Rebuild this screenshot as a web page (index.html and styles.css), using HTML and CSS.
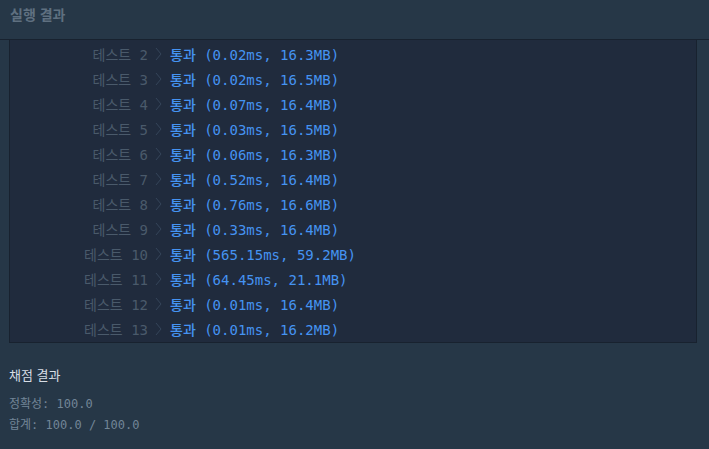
FILE: index.html
```html
<!DOCTYPE html>
<html lang="ko">
<head>
<meta charset="utf-8">
<link rel="stylesheet" href="styles.css">
</head>
<body>
<div class="header"><span class="title">실행 결과</span></div>
<div class="console">
  <div class="row"><span class="label">테스트 2</span><svg class="chev" width="7" height="14" viewBox="0 0 7 14"><polyline points="1,1 6,7 1,13" fill="none" stroke="currentColor" stroke-width="1"/></svg><span class="res"><span class="pass">통과</span> (0.02ms, 16.3MB)</span></div>
  <div class="row"><span class="label">테스트 3</span><svg class="chev" width="7" height="14" viewBox="0 0 7 14"><polyline points="1,1 6,7 1,13" fill="none" stroke="currentColor" stroke-width="1"/></svg><span class="res"><span class="pass">통과</span> (0.02ms, 16.5MB)</span></div>
  <div class="row"><span class="label">테스트 4</span><svg class="chev" width="7" height="14" viewBox="0 0 7 14"><polyline points="1,1 6,7 1,13" fill="none" stroke="currentColor" stroke-width="1"/></svg><span class="res"><span class="pass">통과</span> (0.07ms, 16.4MB)</span></div>
  <div class="row"><span class="label">테스트 5</span><svg class="chev" width="7" height="14" viewBox="0 0 7 14"><polyline points="1,1 6,7 1,13" fill="none" stroke="currentColor" stroke-width="1"/></svg><span class="res"><span class="pass">통과</span> (0.03ms, 16.5MB)</span></div>
  <div class="row"><span class="label">테스트 6</span><svg class="chev" width="7" height="14" viewBox="0 0 7 14"><polyline points="1,1 6,7 1,13" fill="none" stroke="currentColor" stroke-width="1"/></svg><span class="res"><span class="pass">통과</span> (0.06ms, 16.3MB)</span></div>
  <div class="row"><span class="label">테스트 7</span><svg class="chev" width="7" height="14" viewBox="0 0 7 14"><polyline points="1,1 6,7 1,13" fill="none" stroke="currentColor" stroke-width="1"/></svg><span class="res"><span class="pass">통과</span> (0.52ms, 16.4MB)</span></div>
  <div class="row"><span class="label">테스트 8</span><svg class="chev" width="7" height="14" viewBox="0 0 7 14"><polyline points="1,1 6,7 1,13" fill="none" stroke="currentColor" stroke-width="1"/></svg><span class="res"><span class="pass">통과</span> (0.76ms, 16.6MB)</span></div>
  <div class="row"><span class="label">테스트 9</span><svg class="chev" width="7" height="14" viewBox="0 0 7 14"><polyline points="1,1 6,7 1,13" fill="none" stroke="currentColor" stroke-width="1"/></svg><span class="res"><span class="pass">통과</span> (0.33ms, 16.4MB)</span></div>
  <div class="row"><span class="label">테스트 10</span><svg class="chev" width="7" height="14" viewBox="0 0 7 14"><polyline points="1,1 6,7 1,13" fill="none" stroke="currentColor" stroke-width="1"/></svg><span class="res"><span class="pass">통과</span> (565.15ms, 59.2MB)</span></div>
  <div class="row"><span class="label">테스트 11</span><svg class="chev" width="7" height="14" viewBox="0 0 7 14"><polyline points="1,1 6,7 1,13" fill="none" stroke="currentColor" stroke-width="1"/></svg><span class="res"><span class="pass">통과</span> (64.45ms, 21.1MB)</span></div>
  <div class="row"><span class="label">테스트 12</span><svg class="chev" width="7" height="14" viewBox="0 0 7 14"><polyline points="1,1 6,7 1,13" fill="none" stroke="currentColor" stroke-width="1"/></svg><span class="res"><span class="pass">통과</span> (0.01ms, 16.4MB)</span></div>
  <div class="row"><span class="label">테스트 13</span><svg class="chev" width="7" height="14" viewBox="0 0 7 14"><polyline points="1,1 6,7 1,13" fill="none" stroke="currentColor" stroke-width="1"/></svg><span class="res"><span class="pass">통과</span> (0.01ms, 16.2MB)</span></div>
</div>
<div class="summary">
  <div class="sum-title">채점 결과</div>
  <div class="sum-line">정확성: 100.0</div>
  <div class="sum-line">합계: 100.0 / 100.0</div>
</div>
</body>
</html>
```
FILE: styles.css
```css
html, body {
  margin: 0;
  padding: 0;
  background: #263747;
  height: 100%;
}
body {
  font-family: "DejaVu Sans Mono", "Noto Sans CJK KR", monospace;
  overflow: hidden;
}
.header {
  height: 40px;
  box-sizing: border-box;
  padding: 4px 0 0 10px;
  border-bottom: 1px solid #18222f;
}
.title {
  font-family: "Noto Sans CJK KR", sans-serif;
  font-size: 14px;
  font-weight: 700;
  color: #5f7080;
  line-height: 20px;
}
.console {
  margin: -1px 12px 0 9px;
  height: 304px;
  box-sizing: border-box;
  background: #202b3d;
  border: 1px solid #18222f;
  padding-top: 1px;
  overflow: hidden;
}
.row {
  display: flex;
  align-items: center;
  height: 25px;
  font-size: 14px;
}
.label {
  width: 138px;
  text-align: right;
  color: #4a5a6b;
  white-space: pre;
}
.chev {
  color: #35455a;
  margin: 0 8px 0 7px;
  flex: none;
}
.res {
  color: #4593f2;
  white-space: pre;
}
.pass {
  font-family: "Noto Sans CJK KR", sans-serif;
  font-weight: 500;
  color: #4593f2;
}
.summary {
  padding: 22px 0 0 9px;
}
.sum-title {
  font-family: "Noto Sans CJK KR", sans-serif;
  font-size: 13px;
  color: #d6dde5;
  line-height: 20px;
  margin-bottom: 9px;
}
.sum-line {
  font-size: 12px;
  color: #728597;
  line-height: 21px;
}
```
